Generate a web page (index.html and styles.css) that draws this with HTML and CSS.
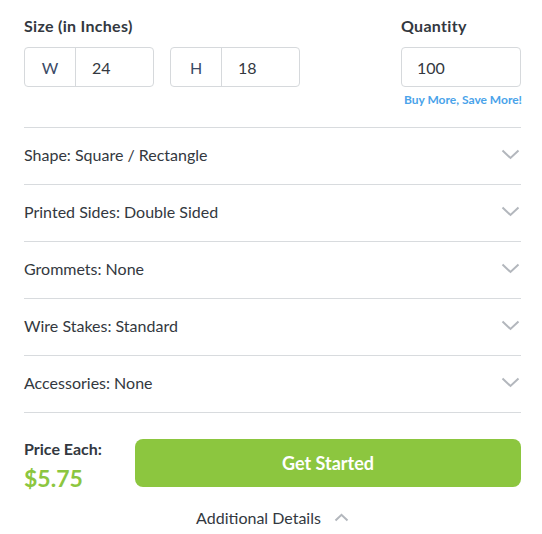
FILE: index.html
```html
<!DOCTYPE html>
<html>
<head>
<meta charset="utf-8">
<link rel="stylesheet" href="styles.css">
</head>
<body>
<div class="page">
  <div class="top">
    <div class="size">
      <div class="label">Size (in Inches)</div>
      <div class="dims">
        <div class="dim"><span class="dim-key">W</span><span class="dim-val">24</span></div>
        <div class="dim"><span class="dim-key">H</span><span class="dim-val">18</span></div>
      </div>
    </div>
    <div class="qty">
      <div class="label">Quantity</div>
      <div class="qty-box">100</div>
      <div class="promo">Buy More, Save More!</div>
    </div>
  </div>
  <div class="options">
    <div class="opt"><span>Shape: Square / Rectangle</span><svg class="chev" width="19" height="11" viewBox="0 0 19 11"><path d="M1.5 1.5 L9.5 9 L17.5 1.5" fill="none" stroke="#b3b7bd" stroke-width="2"/></svg></div>
    <div class="opt"><span>Printed Sides: Double Sided</span><svg class="chev" width="19" height="11" viewBox="0 0 19 11"><path d="M1.5 1.5 L9.5 9 L17.5 1.5" fill="none" stroke="#b3b7bd" stroke-width="2"/></svg></div>
    <div class="opt"><span>Grommets: None</span><svg class="chev" width="19" height="11" viewBox="0 0 19 11"><path d="M1.5 1.5 L9.5 9 L17.5 1.5" fill="none" stroke="#b3b7bd" stroke-width="2"/></svg></div>
    <div class="opt"><span>Wire Stakes: Standard</span><svg class="chev" width="19" height="11" viewBox="0 0 19 11"><path d="M1.5 1.5 L9.5 9 L17.5 1.5" fill="none" stroke="#b3b7bd" stroke-width="2"/></svg></div>
    <div class="opt"><span>Accessories: None</span><svg class="chev" width="19" height="11" viewBox="0 0 19 11"><path d="M1.5 1.5 L9.5 9 L17.5 1.5" fill="none" stroke="#b3b7bd" stroke-width="2"/></svg></div>
  </div>
  <div class="buy">
    <div class="price">
      <div class="price-label">Price Each:</div>
      <div class="price-val">$5.75</div>
    </div>
    <button class="cta">Get Started</button>
  </div>
  <div class="more"><span>Additional Details</span><svg width="15" height="9" viewBox="0 0 15 9"><path d="M1.5 7.5 L7.5 1.8 L13.5 7.5" fill="none" stroke="#b3b7bd" stroke-width="2"/></svg></div>
</div>
</body>
</html>
```

FILE: styles.css
```css
* { box-sizing: border-box; }
html, body { margin: 0; padding: 0; background: #fff; }
body {
  font-family: Lato, "Open Sans", "Liberation Sans", sans-serif;
  color: #333840;
}
.page {
  width: 497px;
  margin-left: 24px;
  padding-top: 16px;
}
.top {
  display: flex;
  justify-content: space-between;
  height: 111px;
}
.label {
  font-size: 16px;
  font-weight: 700;
  line-height: 20px;
  margin-bottom: 11px;
  letter-spacing: 0.3px;
}
.dims { display: flex; gap: 16px; }
.dim {
  display: flex;
  width: 130px;
  height: 40px;
  border: 1px solid #d6d9dc;
  border-radius: 4px;
  font-size: 16px;
  align-items: center;
}
.dim-key {
  width: 51px;
  height: 100%;
  border-right: 1px solid #d6d9dc;
  display: flex;
  align-items: center;
  justify-content: center;
  color: #3a4a66;
}
.dim-val { padding-left: 16px; }
.qty { width: 120px; display: flex; flex-direction: column; }
.qty-box {
  height: 40px;
  border: 1px solid #d6d9dc;
  border-radius: 4px;
  font-size: 16px;
  display: flex;
  align-items: center;
  padding-left: 15px;
}
.promo {
  margin-top: 5px;
  font-size: 12px;
  font-weight: 700;
  color: #4aa3ea;
  text-align: right;
  white-space: nowrap;
  margin-right: -1px;
}
.options { border-top: 1px solid #d8dbde; }
.opt {
  height: 57px;
  border-bottom: 1px solid #d8dbde;
  display: flex;
  align-items: center;
  justify-content: space-between;
  font-size: 16px;
  padding-right: 1px;
  padding-bottom: 3px;
}
.chev { margin-top: 0; }
.buy {
  display: flex;
  align-items: flex-start;
  margin-top: 26px;
  gap: 32px;
}
.price { width: 79px; padding-top: 1px; white-space: nowrap; }
.price-label {
  font-size: 16px;
  font-weight: 700;
  line-height: 18px;
}
.price-val {
  font-size: 23px;
  font-weight: 700;
  color: #8cc63f;
  line-height: 28px;
  margin-top: 6px;
}
.cta {
  flex: 1;
  height: 48px;
  background: #8cc63f;
  border: none;
  border-radius: 8px;
  color: #fff;
  font-family: inherit;
  font-size: 18px;
  font-weight: 700;
  margin-top: 0;
}
.more {
  margin-top: 16px;
  display: flex;
  justify-content: center;
  align-items: center;
  gap: 13px;
  font-size: 16px;
}
```
